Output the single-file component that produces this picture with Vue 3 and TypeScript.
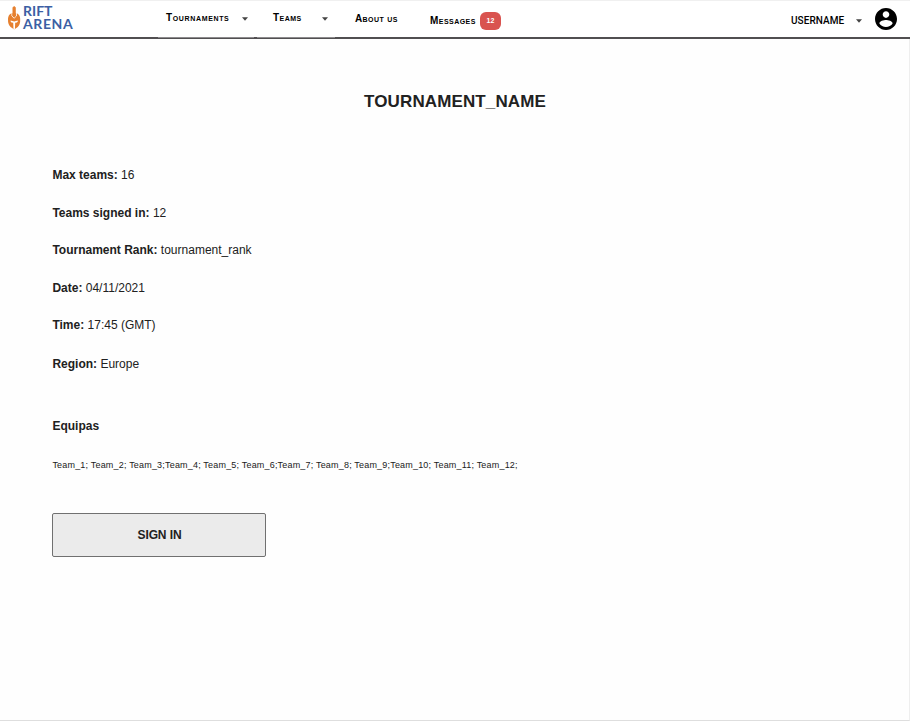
<script setup lang="ts">
interface MenuItem { label: string; kind: string; caret?: boolean; badge?: number }
interface Detail { label: string; value: string; kind: string }

const menu: MenuItem[] = [
  { label: 'Tournaments', kind: 'tournaments', caret: true },
  { label: 'Teams', kind: 'teams', caret: true },
  { label: 'About us', kind: 'about' },
  { label: 'Messages', kind: 'messages', badge: 12 },
]

const details: Detail[] = [
  { label: 'Max teams:', value: '16', kind: 'max' },
  { label: 'Teams signed in:', value: '12', kind: 'signed' },
  { label: 'Tournament Rank:', value: 'tournament_rank', kind: 'rank' },
  { label: 'Date:', value: '04/11/2021', kind: 'date' },
  { label: 'Time:', value: '17:45 (GMT)', kind: 'time' },
  { label: 'Region:', value: 'Europe', kind: 'region' },
]

const teams = 'Team_1; Team_2; Team_3;Team_4; Team_5; Team_6;Team_7; Team_8; Team_9;Team_10; Team_11; Team_12;'
</script>

<template>
  <div class="page">
    <header class="bar">
      <div class="logo">
        <svg class="helmet" width="14" height="26" viewBox="0 0 14 26">
          <path d="M4.4 8.2Q1 10 1 14Q.8 19.5 3.6 22L7.2 24.4L10.8 22Q13.4 19.5 13.2 14Q13.2 10 9.8 8.2Z" fill="#e6802f" />
          <path d="M4.9 7.5V11L7.1 13.2L9.4 11V7.5" fill="none" stroke="#fff" stroke-width=".9" />
          <path d="M5.5 10.8V2.4L7.2 .9L8.8 2.4V10.8L7.2 12.4Z" fill="#e6802f" />
          <path d="M3.6 15.6L7.2 16.6L10.8 15.6V16.6Q10.4 17.8 8.2 17.8L7.9 24.6H6.5L6.2 17.8Q4 17.8 3.6 16.6Z" fill="#fff" />
        </svg>
        <div class="brand"><span>RIFT</span><span class="arena">ARENA</span></div>
      </div>
      <nav class="menu">
        <a v-for="item in menu" :key="item.kind" class="item" :class="item.kind">
          <span class="label">{{ item.label }}</span>
          <svg v-if="item.caret" class="caret" width="6" height="4" viewBox="0 0 6 4"><path d="M0 .3H6L3 3.7Z" fill="#444" /></svg>
          <span v-if="item.badge" class="badge">{{ item.badge }}</span>
        </a>
      </nav>
      <div class="user">
        <span class="username">USERNAME</span>
        <svg class="caret" width="6" height="4" viewBox="0 0 6 4"><path d="M0 .3H6L3 3.7Z" fill="#444" /></svg>
        <svg class="avatar" width="22" height="22" viewBox="2 2 20 20">
          <path d="M12 2C6.48 2 2 6.48 2 12s4.48 10 10 10 10-4.48 10-10S17.52 2 12 2zm0 3c1.66 0 3 1.34 3 3s-1.34 3-3 3-3-1.34-3-3 1.34-3 3-3zm0 14.2c-2.5 0-4.71-1.28-6-3.22.03-1.99 4-3.08 6-3.08 1.99 0 5.97 1.09 6 3.08-1.29 1.94-3.5 3.22-6 3.22z" />
        </svg>
      </div>
    </header>
    <main class="content">
      <h1 class="title">TOURNAMENT_NAME</h1>
      <div class="details">
        <p v-for="d in details" :key="d.kind" class="detail" :class="d.kind">
          <b>{{ d.label }}</b>&nbsp;<span class="value">{{ d.value }}</span>
        </p>
      </div>
      <h2 class="subtitle">Equipas</h2>
      <p class="teamlist">{{ teams }}</p>
      <button class="signin" type="button"><span>SIGN IN</span></button>
    </main>
  </div>
</template>

<style>
body { background: #fff; overflow: hidden; }
</style>

<style scoped>
* { box-sizing: border-box; }
.page {
  width: 910px; height: 721px; background: #fefefe; color: #212121;
  border-top: 1px solid #f0f0f0; border-right: 1px solid #eee; border-bottom: 1px solid #dedede;
  font-family: "Liberation Sans", Arial, sans-serif;
}
.bar { height: 38px; width: 910px; display: flex; background: #fff; border-bottom: 2px solid #514f51; }
.logo { width: 158px; padding: 4px 0 0 7px; display: flex; }
.brand {
  display: flex; flex-direction: column; margin-left: 2px;
  color: #3c5fa4; font: 700 14px/12px Lato, sans-serif;
}
.brand span { height: 12px; }
.brand .arena { letter-spacing: .6px; margin-top: 1px; }
.menu { display: flex; height: 37px; flex: 1; color: #000; }
.item { display: flex; height: 37px; padding-top: 11px; font-size: 10px; line-height: 12px; font-weight: 700; font-variant: small-caps; letter-spacing: .65px; white-space: nowrap; }
.tournaments { width: 96px; padding-left: 8px; border-bottom: 1px solid #8d8b8d; margin-right: 3px; }
.teams { width: 78px; padding-left: 16px; border-bottom: 1px solid #8d8b8d; }
.about { width: 95px; padding-left: 20px; padding-top: 12px; letter-spacing: .4px; }
.messages { padding-top: 14px; letter-spacing: .45px; }
.caret { flex: none; }
.tournaments .label { width: 76px; }
.teams .label { width: 49px; letter-spacing: .45px; }
.item .caret { margin-top: 5px; }
.messages .label { width: 50px; }
.badge {
  width: 21px; height: 18px; margin-top: -3px; border-radius: 6px; background: #d9534f;
  color: #fff; text-align: center; font-size: 7px; line-height: 18px; letter-spacing: 0;
}
.user { display: flex; align-items: flex-start; width: 119px; color: #000; }
.username { width: 65px; margin-top: 14px; font: 500 10px/12px Roboto, sans-serif; letter-spacing: .05px; }
.user .caret { margin-top: 18px; }
.avatar { margin: 7px 0 0 13px; }
.content { padding: 53px 52px 0; display: flex; flex-direction: column; }
.title { margin: 0; padding-left: 1px; align-self: center; font-size: 17px; line-height: 20px; font-weight: 700; letter-spacing: .12px; }
.details { margin-top: 53px; height: 251px; }
.detail { margin: 0; height: 38px; padding-left: .4px; font-size: 12px; line-height: 20px; white-space: nowrap; }
.detail.signed, .detail.date { height: 37px; }
.detail.time { height: 39px; }
.subtitle { margin: 0; padding-left: .4px; font-size: 12px; line-height: 20px; }
.teamlist { margin: 23px 0 0; padding-left: .4px; font-size: 9px; line-height: 12px; letter-spacing: .19px; white-space: nowrap; }
.signin {
  width: 214px; height: 44px; margin-top: 42px; padding: 0 0 0 1px; border: 1px solid #707070; border-radius: 2px;
  background: #ebebeb; color: #212121; font: 700 12px/20px "Liberation Sans", Arial, sans-serif; letter-spacing: -.1px;
}
</style>
